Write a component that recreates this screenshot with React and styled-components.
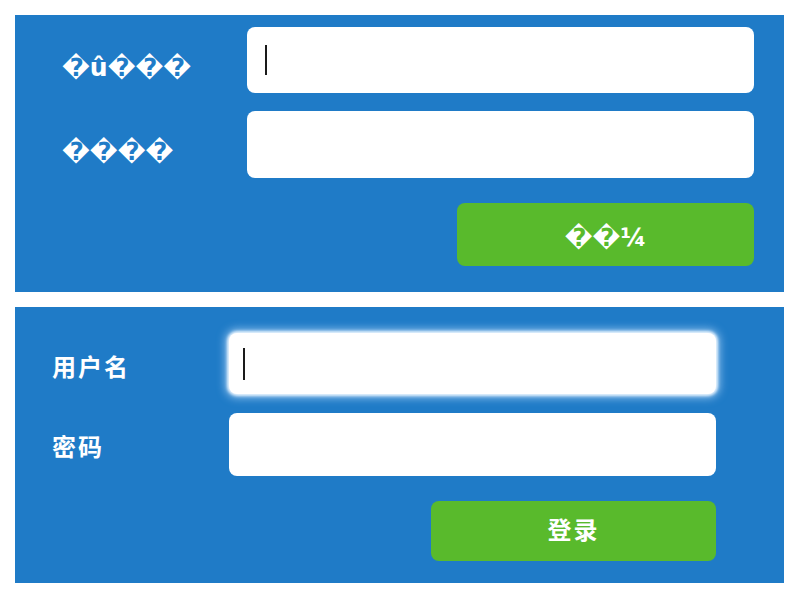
import React from "react";
import styled, { createGlobalStyle, css } from "styled-components";

const GlobalStyle = createGlobalStyle`
  html, body {
    margin: 0;
    padding: 0;
    background: #ffffff;
  }
  body {
    font-family: "DejaVu Sans", "Noto Sans CJK SC", sans-serif;
  }
`;

const Page = styled.div`
  display: flex;
  flex-direction: column;
  gap: 15px;
  padding: 15px 16px 15px 15px;
  width: 769px;
`;

const Panel = styled.form`
  display: grid;
  grid-template-columns: ${(p) => p.$labelCol}px ${(p) => p.$inputCol}px;
  row-gap: ${(p) => p.$rowGap}px;
  padding: ${(p) => p.$pad};
  background: #1f7bc7;
  align-items: center;
`;

const Label = styled.label`
  padding-left: ${(p) => p.$indent}px;
  padding-top: ${(p) => p.$drop || 0}px;
  color: #ffffff;
  font-weight: 700;
  font-size: ${(p) => p.$size}px;
  font-family: ${(p) =>
    p.$cjk
      ? `"Noto Sans CJK SC", sans-serif`
      : `"DejaVu Sans", sans-serif`};
  letter-spacing: ${(p) => (p.$cjk ? "2px" : "0")};
  white-space: nowrap;
`;

const Field = styled.div`
  position: relative;
  height: ${(p) => p.$h}px;
`;

const Input = styled.input`
  box-sizing: border-box;
  width: 100%;
  height: 100%;
  border: none;
  border-radius: 8px;
  background: #ffffff;
  outline: none;
  padding: 0 14px;
  font-size: 20px;
  ${(p) =>
    p.$glow &&
    css`
      box-shadow: 0 0 3px 2px rgba(235, 245, 255, 0.95),
        0 0 8px 4px rgba(170, 210, 245, 0.75);
    `}
`;

const Caret = styled.span`
  position: absolute;
  left: ${(p) => p.$x}px;
  top: 50%;
  width: 2px;
  height: ${(p) => p.$h}px;
  transform: translateY(-50%);
  background: #1a1a1a;
`;

const Submit = styled.button`
  grid-column: 2;
  justify-self: end;
  margin-top: ${(p) => p.$mt}px;
  width: ${(p) => p.$w}px;
  height: ${(p) => p.$h}px;
  padding: ${(p) => p.$pt || 0}px 0 ${(p) => p.$pb || 0}px;
  border: none;
  border-radius: 8px;
  background: #59ba2c;
  color: #ffffff;
  font-weight: 700;
  font-size: ${(p) => p.$size}px;
  font-family: ${(p) =>
    p.$cjk
      ? `"Noto Sans CJK SC", sans-serif`
      : `"DejaVu Sans", sans-serif`};
  letter-spacing: ${(p) => (p.$cjk ? "2px" : "0")};
  cursor: pointer;
`;

export default function App() {
  return (
    <>
      <GlobalStyle />
      <Page>
        <Panel $labelCol={232} $inputCol={507} $rowGap={18} $pad="12px 30px 26px 0">
          <Label $indent={47} $size={25} $drop={14}>{"\uFFFDû\uFFFD\uFFFD\uFFFD"}</Label>
          <Field $h={66}>
            <Input type="text" />
            <Caret $x={18} $h={30} />
          </Field>
          <Label $indent={47} $size={25} $drop={14}>{"\uFFFD\uFFFD\uFFFD\uFFFD"}</Label>
          <Field $h={67}>
            <Input type="password" />
          </Field>
          <Submit type="button" $mt={7} $w={297} $h={63} $size={25} $pt={5}>
            {"\uFFFD\uFFFD¼"}
          </Submit>
        </Panel>

        <Panel $labelCol={214} $inputCol={487} $rowGap={19} $pad="26px 68px 22px 0">
          <Label $indent={37} $size={24} $cjk $drop={3}>用户名</Label>
          <Field $h={61}>
            <Input type="text" $glow />
            <Caret $x={14} $h={32} />
          </Field>
          <Label $indent={37} $size={24} $cjk $drop={2}>密码</Label>
          <Field $h={63}>
            <Input type="password" />
          </Field>
          <Submit type="button" $mt={6} $w={285} $h={60} $size={24} $cjk $pb={6}>
            登录
          </Submit>
        </Panel>
      </Page>
    </>
  );
}
